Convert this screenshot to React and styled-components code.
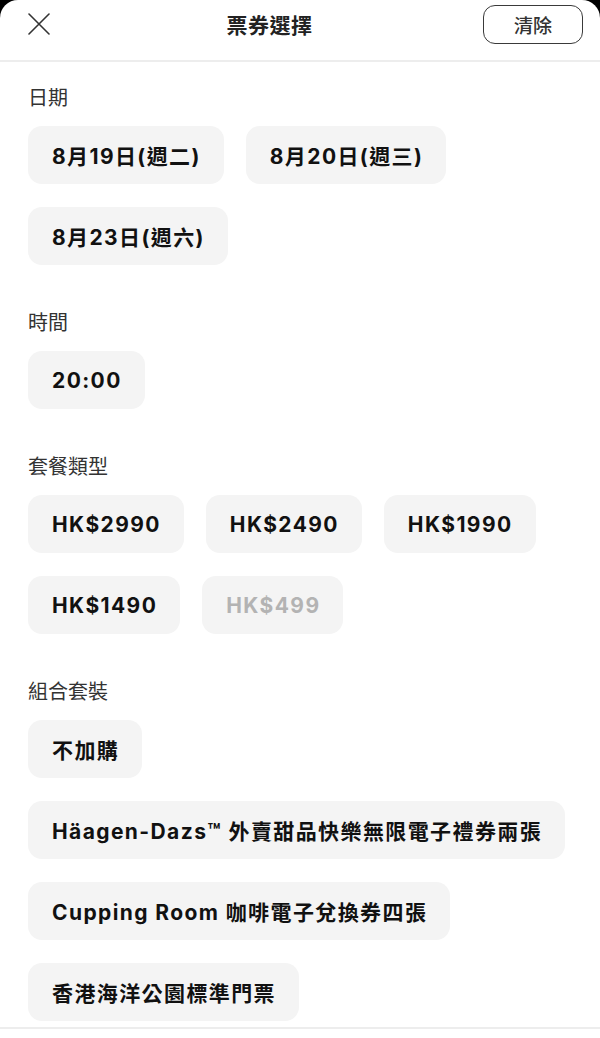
import React from 'react'
import styled, { createGlobalStyle } from 'styled-components'

const GlobalStyle = createGlobalStyle`
  html, body {
    margin: 0;
    padding: 0;
    background: #000;
  }
  body {
    font-family: "Inter", "Noto Sans CJK TC", sans-serif;
    -webkit-font-smoothing: antialiased;
  }
`

const Sheet = styled.div`
  background: #fff;
  border-radius: 18px 18px 0 0;
  min-height: 1038px;
  box-sizing: border-box;
`

const Header = styled.header`
  display: flex;
  align-items: center;
  height: 62px;
  box-sizing: border-box;
  padding: 0 17px 12px 28px;
  border-bottom: 2px solid #ededed;
`

const CloseButton = styled.button`
  display: flex;
  align-items: center;
  justify-content: center;
  width: 22px;
  height: 22px;
  padding: 0;
  border: none;
  background: none;
  color: #333;
`

const Title = styled.h1`
  flex: 1;
  margin: 0;
  padding-left: 6px;
  text-align: center;
  font-size: 21px;
  font-weight: 700;
  color: #222;
  letter-spacing: 0.5px;
`

const ClearButton = styled.button`
  width: 100px;
  height: 39px;
  box-sizing: border-box;
  border: 1.5px solid #3a3a3a;
  border-radius: 12px;
  background: #fff;
  font-family: inherit;
  font-size: 19px;
  font-weight: 500;
  color: #333;
`

const Content = styled.main`
  display: flex;
  flex-direction: column;
  gap: 44px;
  padding: 22px 28px 6px;
  border-bottom: 2px solid #ededed;
`

const Section = styled.section`
  display: flex;
  flex-direction: column;
`

const Label = styled.div`
  font-size: 20px;
  line-height: 28px;
  color: #333;
  margin-bottom: 14px;
`

const ChipRow = styled.div`
  display: flex;
  flex-wrap: wrap;
  column-gap: 22px;
  row-gap: 23px;
`

const Chip = styled.button`
  height: 58px;
  padding: 0 23px 0 24px;
  border: none;
  border-radius: 14px;
  background: #f4f4f4;
  font-family: inherit;
  font-size: 21px;
  font-weight: 700;
  letter-spacing: 1.4px;
  color: ${p => (p.$disabled ? '#b3b3b3' : '#111')};
  white-space: nowrap;
`

const sections = [
  { label: '日期', options: ['8月19日(週二)', '8月20日(週三)', '8月23日(週六)'] },
  { label: '時間', options: ['20:00'] },
  {
    label: '套餐類型',
    options: ['HK$2990', 'HK$2490', 'HK$1990', 'HK$1490', { text: 'HK$499', disabled: true }],
  },
  {
    label: '組合套裝',
    options: [
      '不加購',
      'Häagen-Dazs™ 外賣甜品快樂無限電子禮券兩張',
      'Cupping Room 咖啡電子兌換券四張',
      '香港海洋公園標準門票',
    ],
  },
]

const App = () => {
  return (
    <>
      <GlobalStyle />
      <Sheet>
        <Header>
          <CloseButton aria-label="close">
            <svg width="22" height="22" viewBox="0 0 22 22" fill="none" stroke="currentColor" strokeWidth="1.6" strokeLinecap="round">
              <path d="M1 1L21 21M21 1L1 21" />
            </svg>
          </CloseButton>
          <Title>票券選擇</Title>
          <ClearButton>清除</ClearButton>
        </Header>
        <Content>
          {sections.map(s => (
            <Section key={s.label}>
              <Label>{s.label}</Label>
              <ChipRow>
                {s.options.map(o => {
                  const text = typeof o === 'string' ? o : o.text
                  return (
                    <Chip key={text} $disabled={typeof o !== 'string' && o.disabled}>
                      {text}
                    </Chip>
                  )
                })}
              </ChipRow>
            </Section>
          ))}
        </Content>
      </Sheet>
    </>
  )
}

export default App
